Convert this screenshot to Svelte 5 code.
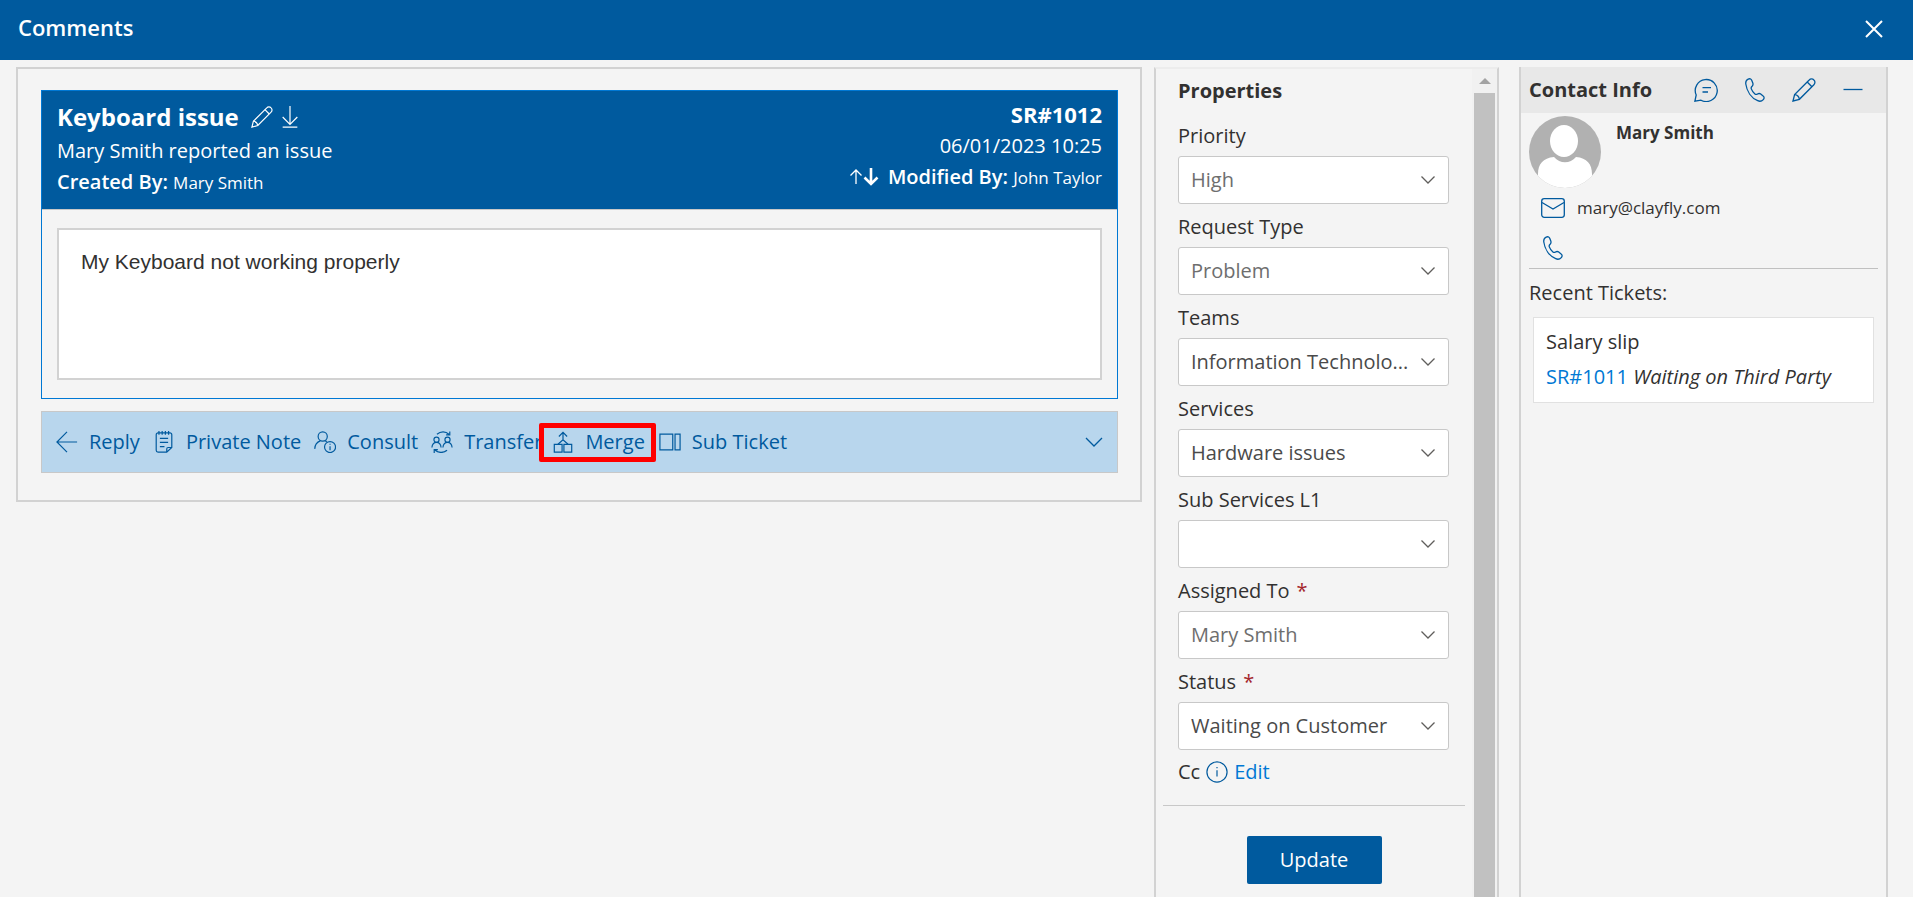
<script lang="ts">
  type Field = { id: string; label: string; value: string; required?: boolean; strong?: boolean };

  const fields: Field[] = [
    { id: "priority",     label: "Priority",        value: "High" },
    { id: "request-type", label: "Request Type",    value: "Problem" },
    { id: "teams",        label: "Teams",           value: "Information Technolo...", strong: true },
    { id: "services",     label: "Services",        value: "Hardware issues", strong: true },
    { id: "sub-services", label: "Sub Services L1", value: "" },
    { id: "assigned-to",  label: "Assigned To",     value: "Mary Smith", required: true },
    { id: "status",       label: "Status",          value: "Waiting on Customer", required: true, strong: true },
  ];

  let message = $state("My Keyboard not working properly");
</script>

{#snippet pencil()}
  <svg viewBox="0 0 24 24" aria-hidden="true">
    <path d="M1 23l1.6-6.4L17.2 2a3.2 3.2 0 0 1 4.7 0 3.2 3.2 0 0 1 0 4.7L7.4 21.3z"/>
    <path d="M15.2 4l4.7 4.7M2.6 16.6c2.5.2 4.4 2.1 4.8 4.7"/>
  </svg>
{/snippet}

{#snippet phone()}
  <svg viewBox="0 0 24 24" aria-hidden="true">
    <path d="M5.2 1.1c1.5-.7 2.9-.3 3.5 1.2l1.1 2.8c.5 1.3.2 2.2-.7 3.1-1 .9-1.2 1.6-.8 2.7
             .7 1.9 2 3.7 3.6 5 .9.7 1.7.7 2.6.1 1.2-.7 2.2-.7 3.2.1l2.4 1.9c1.3 1 1.3 2.4.2 3.6
             -1.5 1.6-3.5 2.1-5.6 1.1C8.4 20 3.8 13.4 2.8 6 2.5 3.6 3.4 1.9 5.2 1.1z"/>
  </svg>
{/snippet}

<div class="page">
  <header class="topbar">
    <h1>Comments</h1>
    <button class="icon-btn close" aria-label="Close">
      <svg viewBox="0 0 24 24" aria-hidden="true"><path d="M4 4l16 16M20 4L4 20"/></svg>
    </button>
  </header>

  <div class="columns">
    <!-- Conversation -->
    <main class="panel thread">
      <article class="ticket">
        <div class="ticket-head">
          <div class="head-left">
            <div class="title-row">
              <h2>Keyboard issue</h2>
              <button class="icon-btn" aria-label="Edit subject">{@render pencil()}</button>
              <button class="icon-btn" aria-label="Download">
                <svg viewBox="0 0 24 24" aria-hidden="true"><path d="M12 0v20M4 12l8 8 8-8M4 23h16"/></svg>
              </button>
            </div>
            <p>Mary Smith reported an issue</p>
            <p><b>Created By:</b> <small>Mary Smith</small></p>
          </div>
          <div class="head-right">
            <p class="number">SR#1012</p>
            <p>06/01/2023 10:25</p>
            <p class="modified">
              <svg viewBox="0 0 30 20" aria-hidden="true">
                <path d="M7 17V3M1.5 8.5L7 3l5.5 5.5"/>
                <path class="bold" d="M22 1v16M15.5 10.5L22 17l6.5-6.5"/>
              </svg>
              <b>Modified By:</b> <small>John Taylor</small>
            </p>
          </div>
        </div>
        <div class="ticket-body">
          <textarea aria-label="Description" bind:value={message}></textarea>
        </div>
      </article>

      <div class="actions">
        <button>
          <svg viewBox="0 0 24 24" aria-hidden="true"><path d="M23 12H1M12 1L1 12l11 11"/></svg>
          Reply
        </button>
        <button>
          <svg viewBox="0 0 24 24" aria-hidden="true">
            <path d="M6.5 2h-1a2 2 0 0 0-2 2v17a2 2 0 0 0 2 2H15l5.5-5V4a2 2 0 0 0-2-2H17M20.5 18h-4a1.5 1.5 0 0 0-1.5 1.5V23"/>
            <path d="M6.5 0v4M10 0v4M13.5 0v4M17 0v4M6.5 2H17M7.5 8h9M7.5 12.5h9M7.5 17h5"/>
          </svg>
          Private Note
        </button>
        <button>
          <svg viewBox="0 0 24 24" aria-hidden="true">
            <circle cx="9.5" cy="6" r="5"/>
            <path d="M.8 19.5c.2-4.4 2.7-7.5 6-8.7M12 10.600l2 1"/>
            <circle cx="17.5" cy="17.5" r="6"/>
            <path d="M17.5 16.5V21M17.5 13.8V15"/>
          </svg>
          Consult
        </button>
        <button>
          <svg viewBox="0 0 24 24" aria-hidden="true">
            <circle cx="6" cy="9.5" r="2.8"/>
            <circle cx="18" cy="9.5" r="2.8"/>
            <path d="M1 18c.3-3.4 2-5.5 5-5.5s4.700 2.1 5 5.5M13 18c.3-3.4 2-5.5 5-5.5s4.700 2.1 5 5.5"/>
            <path d="M6.5 3.5c4-3.500 9.5-3.500 13 0M20.5.5v3.700h-4M17.5 21c-4 3.400-9.500 3-13 0M3.500 24v-3.700h4"/>
          </svg>
          Transfer
        </button>
        <button class="marked">
          <svg viewBox="0 0 24 24" aria-hidden="true">
            <path d="M12 10V1.500M7.500 6L12 1.500 16.500 6M6.500 14.500L12 9.500l5.500 5"/>
            <path d="M2.500 14.500H11V23H2.500zM13 14.500h8.500V23H13z"/>
          </svg>
          Merge
        </button>
        <button>
          <svg viewBox="0 0 24 24" aria-hidden="true"><path d="M1 3.5h14v17H1zM17.5 3.500H23v17h-5.500z"/></svg>
          Sub Ticket
        </button>
        <button class="expand" aria-label="More actions">
          <svg viewBox="0 0 18 18" aria-hidden="true"><path d="M1 5l8 8 8-8"/></svg>
        </button>
      </div>
    </main>

    <!-- Ticket properties -->
    <section class="panel props">
      <form class="props-form" onsubmit={(e) => e.preventDefault()}>
        <h3>Properties</h3>
        {#each fields as field (field.id)}
          <div class="field">
            <label for={field.id}>
              {field.label}{#if field.required}<span class="req">*</span>{/if}
            </label>
            <div class="select-wrap">
              <select id={field.id} class:strong={field.strong}>
                <option>{field.value}</option>
              </select>
              <svg viewBox="0 0 18 18" aria-hidden="true"><path d="M2.5 5.5L9 12l6.5-6.5"/></svg>
            </div>
          </div>
        {/each}
        <div class="cc">
          <span>Cc</span>
          <svg viewBox="0 0 24 24" aria-hidden="true">
            <circle cx="12" cy="12" r="11"/>
            <path d="M12 10v7M12 6.5V8"/>
          </svg>
          <a href="#cc">Edit</a>
        </div>
        <div class="submit-row">
          <button class="update" type="submit">Update</button>
        </div>
      </form>
      <div class="scroll-track" aria-hidden="true">
        <span class="scroll-up"></span>
        <span class="scroll-thumb"></span>
      </div>
    </section>

    <!-- Contact -->
    <aside class="panel contact">
      <div class="contact-head">
        <h3>Contact Info</h3>
        <button class="icon-btn" aria-label="Chat">
          <svg viewBox="0 0 24 24" aria-hidden="true">
            <path d="M.9 23.2L2.2 17A11 11 0 1 1 7 22.2z"/>
            <path d="M8.5 9.700H17M8.5 14H14"/>
          </svg>
        </button>
        <button class="icon-btn" aria-label="Call">{@render phone()}</button>
        <button class="icon-btn" aria-label="Edit contact">{@render pencil()}</button>
        <button class="icon-btn" aria-label="Collapse">
          <svg viewBox="0 0 24 24" aria-hidden="true"><path d="M2.5 11.5h19"/></svg>
        </button>
      </div>
      <div class="contact-body">
        <div class="person">
          <svg class="avatar" viewBox="0 0 72 72" aria-hidden="true">
            <clipPath id="avatar-clip"><circle cx="36" cy="36" r="36"/></clipPath>
            <g clip-path="url(#avatar-clip)">
              <rect width="72" height="72" fill="#b1b1b1"/>
              <ellipse cx="35" cy="25" rx="14" ry="16" fill="#fff"/>
              <path fill="#fff" d="M9 72V58c0-10 5-16 16-17 6 7 16 7 22 0 11 1 16 7 16 17v14z"/>
            </g>
          </svg>
          <strong>Mary Smith</strong>
        </div>
        <div class="line">
          <svg viewBox="0 0 24 24" aria-hidden="true">
            <rect x=".7" y="2.7" width="22.6" height="18.6" rx="2.5"/>
            <path d="M1 6.5L12 13l11-6.5"/>
          </svg>
          <span>mary@clayfly.com</span>
        </div>
        <div class="line">{@render phone()}</div>
        <h4>Recent Tickets:</h4>
        <div class="recent">
          <p>Salary slip</p>
          <p><a href="#sr1011">SR#1011</a> <em>Waiting on Third Party</em></p>
        </div>
      </div>
    </aside>
  </div>
</div>

<style>
  :global(body) { background: #f4f4f4; }

  .page {
    display: flex;
    flex-direction: column;
    height: 100vh;
    overflow: hidden;
    font-family: "Segoe UI", "Open Sans", "Noto Sans", sans-serif;
    font-size: 20px;
    line-height: 28px;
    color: #323130;
  }
  .page * { box-sizing: border-box; }

  h1, h2, h3, h4, p { margin: 0; }

  button {
    font: inherit;
    color: inherit;
    background: none;
    border: none;
    padding: 0;
    cursor: pointer;
  }

  a { color: #0078d4; text-decoration: none; }

  svg {
    width: 22px;
    height: 22px;
    flex-shrink: 0;
    fill: none;
    stroke: currentColor;
    stroke-width: 1.3;
  }

  .icon-btn { display: flex; }

  .topbar {
    display: flex;
    align-items: center;
    justify-content: space-between;
    height: 60px;
    flex-shrink: 0;
    padding: 0 27px 6px 18px;
    background: #005a9e;
    color: #fff;
  }
  .topbar h1 { font-size: 22px; font-weight: 600; }
  .close { padding-top: 4px; }
  .close svg { width: 24px; height: 24px; stroke-width: 2; }

  .columns {
    display: grid;
    grid-template-columns: 1fr 345px 389px;
    flex: 1;
    min-height: 0;
    padding: 7px 25px 0 16px;
  }

  .panel { border: 2px solid #d2d2d2; }

  .thread {
    align-self: start;
    margin-right: 12px;
    padding: 21px 22px 27px 23px;
  }

  .ticket { border: 1px solid #0078d4; }
  .ticket-head {
    display: flex;
    justify-content: space-between;
    height: 118px;
    padding: 8px 15px;
    background: #005a9e;
    color: #fff;
  }
  .title-row { display: flex; align-items: center; gap: 6px; height: 36px; }
  .title-row h2 { margin-right: 6px; font-size: 24px; font-weight: 700; }
  .ticket-head p { height: 31px; line-height: 31px; }
  .ticket-head b { font-weight: 600; }
  .ticket-head small { font-size: 17px; }
  .head-right { text-align: right; }
  .head-right .number { font-size: 22px; font-weight: 700; }
  .modified svg { width: 30px; height: 20px; margin-right: 4px; vertical-align: -3px; }
  .modified .bold { stroke-width: 2.6; }

  .ticket-body {
    display: flex;
    padding: 18px 15px;
    border-top: 1px solid #c8c8c8;
  }
  textarea {
    flex: 1;
    height: 152px;
    padding: 18px 22px;
    border: 2px solid #d2d2d2;
    background: #fff;
    color: #323130;
    font: 21px/28px "Liberation Sans", Arial, sans-serif;
    resize: none;
    outline: none;
  }

  .actions {
    display: flex;
    align-items: center;
    gap: 13px;
    height: 62px;
    margin-top: 12px;
    padding: 0 14px;
    border: 1px solid #c8c8c8;
    background: #b8d6ed;
    color: #005a9e;
  }
  .actions button { display: flex; align-items: center; gap: 11px; }
  .actions .marked {
    height: 39px;
    margin: 0 -10px 0 -16px;
    padding: 0 6px 0 8px;
    border: 5px solid #f00;
    border-radius: 2px;
  }
  .actions .expand { margin-left: auto; }
  .expand svg { width: 18px; height: 18px; }

  .props {
    display: flex;
    border-bottom: none;
    border-top-color: #ececec;
  }
  .props-form { flex: 1; padding: 8px 0 0 22px; }
  h3 { font-size: 20px; font-weight: 700; }
  .field { width: 271px; margin-top: 16px; }
  .field + .field { margin-top: 8px; }
  .field label { display: block; height: 35px; line-height: 30px; }
  .req { margin-left: 7px; color: #a4262c; }
  .select-wrap { display: grid; align-items: center; }
  .select-wrap > * { grid-area: 1 / 1; }
  .select-wrap svg {
    justify-self: end;
    width: 18px;
    height: 18px;
    margin-right: 12px;
    color: #605e5c;
    pointer-events: none;
  }
  select {
    appearance: none;
    width: 100%;
    height: 48px;
    padding: 0 12px;
    border: 1px solid #c8c8c8;
    border-radius: 3px;
    background: #fff;
    color: #6e6e6e;
    font: inherit;
  }
  select.strong { color: #4a4a4a; }

  .cc { display: flex; align-items: center; gap: 6px; margin-top: 8px; }
  .cc svg { color: #005a9e; }

  .submit-row {
    display: flex;
    justify-content: center;
    margin: 19px 7px 0 -15px;
    padding-top: 30px;
    border-top: 1px solid #c8c8c8;
  }
  .update {
    width: 135px;
    height: 48px;
    border-radius: 2px;
    background: #005a9e;
    color: #fff;
  }

  .scroll-track {
    display: flex;
    flex-direction: column;
    align-items: center;
    width: 25px;
    background: #f1f1f1;
  }
  .scroll-up {
    margin: 9px 0;
    border: 6px solid transparent;
    border-top: none;
    border-bottom-color: #a3a3a3;
  }
  .scroll-thumb { flex: 1; width: 21px; background: #c1c1c1; }

  .contact {
    margin-left: 20px;
    border-top: none;
    border-bottom: none;
  }
  .contact-head {
    display: flex;
    align-items: center;
    gap: 25px;
    height: 46px;
    padding: 0 21px 0 8px;
    background: #e8e8e8;
  }
  .contact-head h3 { margin-right: auto; }
  .contact-head svg, .line svg { width: 24px; height: 24px; color: #005a9e; }

  .contact-body { padding: 3px 8px 0; }
  .person { display: flex; gap: 15px; }
  .person strong { font-size: 17px; font-weight: 700; line-height: 34px; }
  .avatar { width: 72px; height: 72px; stroke: none; }
  .line {
    display: flex;
    align-items: center;
    gap: 12px;
    height: 40px;
    padding-left: 12px;
    font-size: 17px;
  }
  h4 {
    padding-top: 10px;
    border-top: 1px solid #c0c0c0;
    font-size: 20px;
    font-weight: 400;
  }
  .recent {
    margin: 10px 4px 0;
    padding: 6px 12px 8px;
    border: 1px solid #e1e1e1;
    background: #fff;
  }
  .recent p { line-height: 35px; }
</style>
